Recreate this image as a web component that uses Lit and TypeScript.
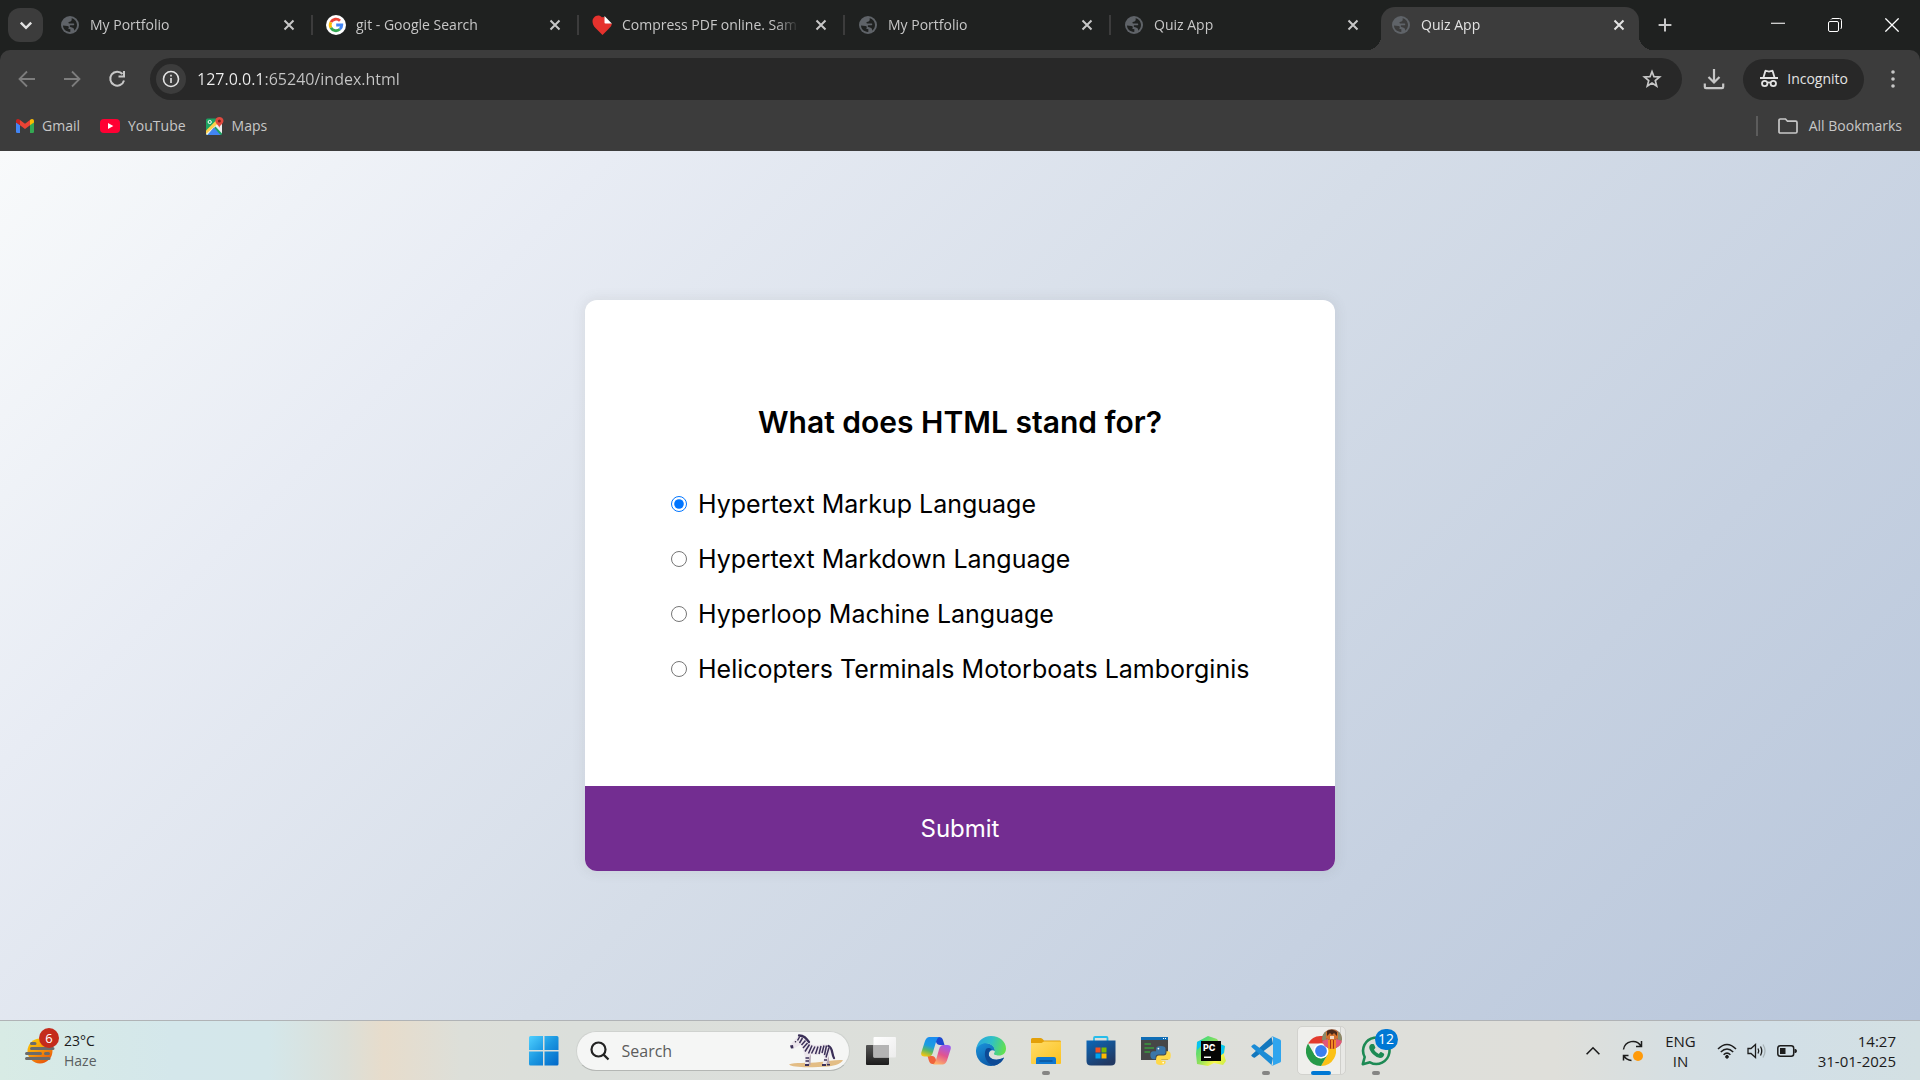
import { LitElement, html, css, svg, nothing, type TemplateResult } from "lit";
import { customElement, property, state } from "lit/decorators.js";
import { classMap } from "lit/directives/class-map.js";

/* ---------- icons ---------- */

const globe = (hole: string) => svg`<svg class="ico18" viewBox="0 0 18 18" aria-hidden="true">
  <circle cx="9" cy="9" r="9" fill="#5f6368"/>
  <path fill=${hole} d="M2 9.6 6.4 9.9C7.6 10 8 10.8 7.7 11.8L7.2 12.8 9.4 13.3 9.3 15.9C5 16 2 13 2 9.6ZM10.6 2.2C13.6 2.8 16 5.600 16 9 16 11.400 14.900 13.400 13.200 14.700 13.300 12.900 12.700 11.800 11 11.400L9.300 10.900C8.500 10.500 8.600 9.600 9.300 9.300L12.700 9.200C13.500 8.900 13.500 7.800 12.700 7.500L8.200 7.400C7.300 7.200 7.200 6.300 7.900 5.900L9.500 5.500C10.500 5.100 10.900 4 10.600 2.200Z"/>
</svg>`;

const googleIcon = svg`<svg class="ico20" viewBox="0 0 20 20" aria-hidden="true">
  <circle cx="10" cy="10" r="10" fill="#fff"/>
  <g fill="none" stroke-width="2.800">
    <path stroke="#ea4335" d="M4.900 7.200A5.800 5.800 0 0 1 14 5.800"/>
    <path stroke="#fbbc05" d="M4.900 12.800A5.800 5.800 0 0 1 4.900 7.200"/>
    <path stroke="#34a853" d="M13.800 14.300A5.800 5.800 0 0 1 4.900 12.800"/>
    <path stroke="#4285f4" d="M10.200 10H15.800A5.800 5.800 0 0 1 13.800 14.300"/>
  </g>
</svg>`;

const lovePdfIcon = svg`<svg class="ico20" viewBox="0 0 20 20" aria-hidden="true">
  <path fill="#e5322d" d="M10.500 20 3.500 13C0 9.500-.2 5 1.800 2.800 4-.2 7.800-.2 9.800 2.200L12.500 2 13.500 7.500 20 8.500C19.500 11 18 12.500 16.500 14Z"/>
  <path fill="#fff" d="M12.500 1 19.800 8.500H13.300Q12.500 8.500 12.500 7.700Z"/>
</svg>`;

const closeIcon = svg`<svg class="ico12" viewBox="0 0 12 12" aria-hidden="true"><path d="M1.500 1.500 10.500 10.500M10.500 1.500 1.500 10.500" stroke="currentColor" stroke-width="2" fill="none"/></svg>`;

const line = (size: number, d: string, width = 2) => svg`<svg width=${size} height=${size} viewBox="0 0 20 20" fill="none" stroke="currentColor" stroke-width=${width} aria-hidden="true"><path d=${d}/></svg>`;

const restoreIcon = svg`<svg width="14" height="14" viewBox="0 0 14 14" fill="none" stroke="#fff" aria-hidden="true"><rect x=".5" y="3.500" width="10" height="10" rx="1.500"/><path d="M3 1.500Q3.500.5 5 .5H11.500Q13.500.5 13.500 2.500V9Q13.500 10.500 12.500 11"/></svg>`;

const infoIcon = svg`<svg width="18" height="18" viewBox="0 0 18 18" aria-hidden="true"><circle cx="9" cy="9" r="7.500" fill="none" stroke="#e3e3e3" stroke-width="1.600"/><path d="M8.200 8H9.800V13H8.200ZM8.200 4.800H9.800V6.500H8.200Z" fill="#e3e3e3"/></svg>`;

const starIcon = svg`<svg width="20" height="20" viewBox="0 0 20 20" fill="none" stroke="#c7c7c7" stroke-width="1.700" aria-hidden="true"><path d="M10 2.600 12 7.700 17.600 8 13.300 11.600 14.700 17 10 14 5.300 17 6.700 11.600 2.400 8 8 7.700Z"/></svg>`;

const downloadIcon = svg`<svg width="22" height="22" viewBox="0 0 22 22" fill="none" stroke="#c7c7c7" stroke-width="2.200" aria-hidden="true"><path d="M11 1V14M5.500 9 11 14.500 16.500 9M1.800 15.500V19Q1.800 20.200 3 20.200H19Q20.200 20.200 20.200 19V15.500"/></svg>`;

const incognitoIcon = svg`<svg width="20" height="20" viewBox="0 0 20 20" fill="none" stroke="#e3e3e3" stroke-width="1.800" aria-hidden="true"><path d="M1 9H19M4.500 8.500 6.300 2.200Q6.600 1.600 7.300 1.800L10 2.500 12.700 1.800Q13.400 1.600 13.700 2.200L15.500 8.500M8.500 13.800Q10 12.800 11.500 13.800"/><circle cx="5.700" cy="14.500" r="2.700"/><circle cx="14.300" cy="14.500" r="2.700"/></svg>`;

const menuIcon = svg`<svg width="20" height="20" viewBox="0 0 20 20" fill="#c7c7c7" aria-hidden="true"><circle cx="10" cy="3" r="1.800"/><circle cx="10" cy="10" r="1.800"/><circle cx="10" cy="17" r="1.800"/></svg>`;

const gmailIcon = svg`<svg width="18" height="14" viewBox="0 0 18 14" aria-hidden="true"><path fill="#4285f4" d="M0 3 4 6V14H1.300Q0 14 0 12.700Z"/><path fill="#34a853" d="M18 3 14 6V14H16.700Q18 14 18 12.700Z"/><path fill="#ea4335" d="M4 1 9 4.800 14 1V6.300L9 10 4 6.300Z"/><path fill="#c5221f" d="M0 2.200C0 0 2.200-.6 4 1V6.300L0 3.400Z"/><path fill="#fbbc04" d="M18 2.200C18 0 15.800-.6 14 1V6.300L18 3.400Z"/></svg>`;

const youtubeIcon = svg`<svg width="20" height="14" viewBox="0 0 20 14" aria-hidden="true"><rect width="20" height="14" rx="4" fill="#ff0033"/><path fill="#fff" d="M8 4 13.300 7 8 10Z"/></svg>`;

const mapsIcon = svg`<svg width="18" height="18" viewBox="0 0 18 18" aria-hidden="true"><rect y="1.500" width="16" height="16.500" rx="1.500" fill="#1da462"/><path fill="#eee" d="M0 15 15 3 16 4V16.500L9.500 9.500 1.500 18Q0 18 0 16.500Z"/><path fill="#ffd04b" d="M0 13.500 10 3.500 12.500 6 0 17Z"/><path fill="#4285f4" d="M1.500 18 8 10.500 14.500 18Z"/><circle cx="3.700" cy="5" r="1.600" fill="none" stroke="#fff" stroke-width="1"/><path fill="#e04a3f" d="M13.300 11C13.100 8 9.300 7 9.300 3.800 9.300 1.500 11.200 0 13.400 0S17.500 1.500 17.500 3.800C17.500 7 13.600 8 13.300 11Z"/><circle cx="13.400" cy="3.900" r="1.500" fill="#7b231e"/></svg>`;

const folderIcon = svg`<svg width="20" height="16" viewBox="0 0 20 16" fill="none" stroke="#c7c7c7" stroke-width="1.700" aria-hidden="true"><path d="M1 2.300Q1 1 2.300 1H7.500L9.500 3.200H17.700Q19 3.200 19 4.500V13.700Q19 15 17.700 15H2.300Q1 15 1 13.700Z"/></svg>`;

const weatherIcon = svg`<svg width="30" height="30" viewBox="0 0 30 30" aria-hidden="true">
  <defs><linearGradient id="sun" x1="0" y1="0" x2=".6" y2="1"><stop offset="0" stop-color="#fbd00a"/><stop offset=".5" stop-color="#f9a00a"/><stop offset="1" stop-color="#e8590c"/></linearGradient></defs>
  <circle cx="15" cy="15" r="12.500" fill="url(#sun)"/>
  <path stroke="#6b6b6b" stroke-width="3" stroke-linecap="round" fill="none" d="M6.500 7.500H10M6.500 12.500H28M1.500 17.500H15.500M20.500 17.500H23.500M1.500 22.500H24"/>
</svg>`;

const startIcon = svg`<svg width="30" height="30" viewBox="0 0 30 30" aria-hidden="true">
  <defs><linearGradient id="win" x1="0" y1="0" x2="1" y2="1"><stop offset="0" stop-color="#4fd0ff"/><stop offset=".5" stop-color="#1a96e0"/><stop offset="1" stop-color="#0067c8"/></linearGradient></defs>
  <path fill="url(#win)" d="M1.500 0H14V14H0V1.500Q0 0 1.500 0ZM15.500 0H28Q29.500 0 29.500 1.500V14H15.500ZM0 15.500H14V29.500H1.500Q0 29.500 0 28ZM15.500 15.500H29.500V28Q29.500 29.500 28 29.500H15.500Z"/>
</svg>`;

const searchIcon = svg`<svg width="20" height="20" viewBox="0 0 20 20" fill="none" stroke="#222" stroke-width="2.200" aria-hidden="true"><circle cx="8.500" cy="8.500" r="7"/><path d="M13.600 13.600 18.500 18.500"/></svg>`;

const zebraIcon = svg`<svg width="56" height="34" viewBox="0 0 56 34" aria-hidden="true">
  <path fill="#e3bd85" d="M1 30.500C6 28 20 29.500 32 28 40 27 48 25.500 55 26 53 30 46 33 30 33 14 33.500 4 33 1 30.500Z"/>
  <path fill="#b7a8b4" d="M19 20 20.500 31H22.500L23 20ZM36 20 39 31H41.500L40.500 19Z"/>
  <path fill="#ece6ec" d="M8.500 4 11 1 14 2.500C19 3.500 20 8.500 24 10.500 30 12.500 36 9 40 11 43 13 43.500 16.500 42 20L40 24 38 31H34.500L36 24 34.500 19.500C30 21.500 27 21 23 20L21 24 20.500 31H17L17 23 15 16C14 13 13.500 11.500 12 11L6 14.500Q3 15 2 13L4 8.500Z"/>
  <path stroke="#3b3058" stroke-width="1.500" fill="none" d="M11.500 3 9.500 6.500M14.500 4 11.500 9M17.500 6.500 13.500 11M19.500 9 15 14M21.500 10.500 17 17.500M24 11.500 20.500 19.500M27 12.500 23.500 19.500M30 12.500 27.500 20M33 12 31 20M36 11.500 34 19M38.500 11.500 36.500 21M41 13.500 38 23.500M17.500 24H21M17.500 27H21M36 26H39"/>
  <path stroke="#3b3058" stroke-width="2.300" fill="none" stroke-linecap="round" d="M40.500 12C45 13.500 43.500 20 46 24M11 1.500C16 1.500 18 4 21 8"/>
  <path fill="#3b3058" d="M2 11.500 5 11 5.500 14.200 3 14.500ZM17 30H21V32H17ZM34 30H38V32H34ZM39 30H42V31.500H39Z"/>
  <circle cx="7.500" cy="7.800" r=".8" fill="#2a2240"/>
</svg>`;

const taskViewIcon = svg`<svg width="30" height="28" viewBox="0 0 30 28" aria-hidden="true"><defs><linearGradient id="tvd" x1="0" y1="0" x2="0" y2="1"><stop offset="0" stop-color="#555"/><stop offset="1" stop-color="#1c1c1c"/></linearGradient><linearGradient id="tvl" x1="0" y1="0" x2="1" y2="1"><stop offset="0" stop-color="#fff"/><stop offset="1" stop-color="#ececec"/></linearGradient></defs><rect y="8" width="23" height="20" rx="1" fill="url(#tvd)"/><rect x="7.500" width="22.500" height="20.500" rx="1" fill="url(#tvl)"/><path fill="#b4b4b4" d="M7.500 8H23V20.500H7.500Z"/></svg>`;

const copilotIcon = svg`<svg width="30" height="28" viewBox="0 0 30 28" aria-hidden="true">
  <defs>
    <linearGradient id="cpA" x1=".6" y1="0" x2=".3" y2="1"><stop offset="0" stop-color="#1a8cf0"/><stop offset=".45" stop-color="#1a9de0"/><stop offset=".7" stop-color="#58b768"/><stop offset="1" stop-color="#f2c511"/></linearGradient>
    <linearGradient id="cpB" x1=".7" y1="0" x2=".3" y2="1"><stop offset="0" stop-color="#9b5cf0"/><stop offset=".5" stop-color="#e2558f"/><stop offset="1" stop-color="#ffb066"/></linearGradient>
  </defs>
  <path fill="#1c48cf" d="M13 0H18Q21 0 22 3L23.500 8H19Q16 8 15 5Z"/>
  <path fill="#f0643c" d="M6.500 19H11Q14 19 15 23L17 27H11.500Q9 27 8 24Z"/>
  <path fill="url(#cpA)" d="M8.500 0H18Q16 1 15 5L12 15Q11 19.500 7.500 19.500H3.500Q-.5 19.500 .3 15.500L4 4Q5.500 0 8.500 0Z"/>
  <path fill="url(#cpB)" d="M21.500 27.500H12Q14 26 15 23L18 12.500Q19 8 22.500 8H26.500Q30.500 8 29.700 12L26 23.500Q24.500 27.500 21.500 27.500Z"/>
</svg>`;

const edgeIcon = svg`<svg width="30" height="30" viewBox="0 0 30 30" aria-hidden="true">
  <defs>
    <linearGradient id="edA" x1="0" y1=".3" x2="1" y2=".5"><stop offset="0" stop-color="#2aa5e0"/><stop offset=".5" stop-color="#2fc0c6"/><stop offset="1" stop-color="#62e04e"/></linearGradient>
    <linearGradient id="edB" x1="0" y1="0" x2=".7" y2="1"><stop offset="0" stop-color="#1a94dc"/><stop offset="1" stop-color="#0b52a0"/></linearGradient>
  </defs>
  <path fill="url(#edB)" d="M0 14C1 8 6 6.500 10 7 16 7.500 19 11 19 15 15 13 12 16 13 20 15 24 22 25 28 21.500 25.500 27 20.500 30 15 30 6.500 30-.5 23 0 14Z"/>
  <path fill="#0d4a96" d="M10 13C7 19 10 28 18 29.500 23 28.500 26.500 25.500 28 21.500 22 25 15 24 13 20 12 16.500 13.500 14 16 13.500 14 11.500 11.500 11.500 10 13Z"/>
  <path fill="url(#edA)" d="M0 14C1 5.500 7 0 15 0 24 0 30 6 30 12.500 30 17 27 19.500 23 19.500 19.500 19.500 17.500 18.500 18 17.500 19.500 16 19 12 16 9.500 11 5.500 3 7 0 14Z"/>
</svg>`;

const explorerIcon = svg`<svg width="30" height="26" viewBox="0 0 30 26" aria-hidden="true"><defs><linearGradient id="fe" x1="0" y1="0" x2="1" y2="1"><stop offset="0" stop-color="#ffdc69"/><stop offset="1" stop-color="#fcc21f"/></linearGradient></defs><path fill="#e3a008" d="M0 1.500Q0 0 1.500 0H9.500Q10.500 0 11.300.8L13 2.500H29Q30 2.500 30 4V8H0Z"/><path fill="url(#fe)" d="M0 5H10.500L13 3.500H30V25Q30 26 29 26H1Q0 26 0 25Z"/><path fill="#0f78d0" d="M5 26V21Q5 19 7 19H23Q25 19 25 21V26Z"/><path stroke="#0a4f95" stroke-width="1.300" d="M8.500 23H21.500"/></svg>`;

const storeIcon = svg`<svg width="30" height="30" viewBox="0 0 30 30" aria-hidden="true"><defs><linearGradient id="ms" x1="0" y1="0" x2=".6" y2="1"><stop offset="0" stop-color="#0c67b8"/><stop offset="1" stop-color="#213963"/></linearGradient></defs><path fill="none" stroke="#27bdea" stroke-width="1.800" d="M8 5.500V2Q8 1 9 1H20.500Q21.500 1 21.500 2V5.500"/><path fill="url(#ms)" d="M.5 4.500H29.500V25Q29.500 29.500 25 29.500H5Q.5 29.500 .5 25Z"/><path fill="#f25022" d="M9.500 11.500H14.500V16.500H9.500Z"/><path fill="#7fba00" d="M15.500 11.500H20.500V16.500H15.500Z"/><path fill="#00a4ef" d="M9.500 17.500H14.500V22.500H9.500Z"/><path fill="#ffb900" d="M15.500 17.500H20.500V22.500H15.500Z"/></svg>`;

const snakes = svg`<path fill="#3b76a8" d="M18.500 9.500H9.500V8.500H14V7H9Q9 5 9 4 9 1 14 1T19 4V8Q19 10 17 10H11.500Q8.500 10 8.500 13V15H7Q3 15 3 10.500T7 6.500H14"/><path fill="#ffd94a" d="M9 15.500Q9 11 12 11H17Q20 11 20 8V6.500H21.500Q24.500 6.500 24.500 11T21.500 15.500H14.500V16.500H19V18.500Q19 21 14 21T9 18.500Z"/><circle cx="11.500" cy="3.800" r=".9" fill="#fff"/><circle cx="16.500" cy="18.500" r=".9" fill="#fff"/>`;

const pythonIcon = svg`<svg width="30" height="30" viewBox="0 0 30 30" aria-hidden="true"><path fill="#474747" d="M0 1H27V24H0Z"/><path fill="#0f6db5" d="M0 1H27V4H0Z"/><path fill="#fff" d="M22 2H23V3H22ZM24 2H25V3H24Z"/><path stroke="#3c9a3f" stroke-width="1.300" d="M3.500 8H10M3.500 12H13M3.500 16H9"/><g transform="translate(6.500 9) scale(.95)">${snakes}</g></svg>`;

const pycharmIcon = svg`<svg width="30" height="30" viewBox="0 0 30 30" aria-hidden="true"><defs><linearGradient id="pc" x1="0" y1="0" x2="1" y2=".8"><stop offset="0" stop-color="#21d789"/><stop offset=".5" stop-color="#8fe05a"/><stop offset=".8" stop-color="#fcf84a"/><stop offset="1" stop-color="#d5ef4b"/></linearGradient></defs><path fill="url(#pc)" d="M1 6 12 0 21 3 24 8 29 10 28 19 30 25 27 29 18 27 12 30 1 28 0 18Z"/><path fill="#07c3f2" d="M24 8 29 10 28 17 24 20ZM1 6 6 4V9L1 14Z"/><path fill="#050505" d="M5 5H25V25H5Z"/><path fill="#fff" d="M8 20.500H15V22H8Z"/><text x="7" y="15" font-family="Inter, sans-serif" font-weight="800" font-size="9" fill="#fff">PC</text></svg>`;

const vscodeIcon = svg`<svg width="30" height="30" viewBox="0 0 30 30" aria-hidden="true"><path fill="#1277bd" d="M1 18.500 20.500 1 22 8 4 21.500Q3 22 2 21.300L.5 20Q0 19.300 1 18.500Z"/><path fill="#1b8cd6" d="M1 11.500 20.500 29 22 22 4 8.500Q3 8 2 8.700L.5 10Q0 10.700 1 11.500Z"/><path fill="#2fa5ee" d="M20 .5Q21 0 22 .4L29 3.500Q30 4 30 5V25Q30 26 29 26.500L22 29.600Q21 30 20 29.500 22 30 22 28V2Q22 0 20 .5Z"/></svg>`;

const chromeIcon = svg`<svg width="30" height="30" viewBox="0 0 30 30" aria-hidden="true"><path fill="#e33b2e" d="M2 7.500A15 15 0 0 1 28 7.500H15Z"/><path fill="#fbc116" d="M28 7.500A15 15 0 0 1 15 30L21.500 18.700 15 7.500Z"/><path fill="#269a48" d="M2 7.500A15 15 0 0 0 15 30L21.500 18.700 15 22.500 8.500 18.700Z"/><circle cx="15" cy="15" r="7.500" fill="#fff"/><circle cx="15" cy="15" r="5.900" fill="#3b7ff0"/></svg>`;

const avatarIcon = svg`<svg width="20" height="20" viewBox="0 0 20 20" aria-hidden="true"><defs><clipPath id="av"><circle cx="10" cy="10" r="10"/></clipPath></defs><g clip-path="url(#av)"><path fill="#a0694a" d="M0 0H20V20H0Z"/><path fill="#8a8a6a" d="M0 3H4V11H0ZM16 3H20V11H16Z"/><path fill="#d4722e" d="M4 3 8 1H13L16 4V9L12 11H8L4 9Z"/><path fill="#4a2a1b" d="M5 2Q10-1 15 3L15 7 12 4 10 6 8 4 5 7Z"/><path fill="#f1d9c4" d="M8 7H12V10H8Z"/><path fill="#e2577a" d="M0 12 6 10 7 20H0ZM20 12 14 10 13 20H20Z"/><path fill="#f08a24" d="M6 11H14V20H6Z"/><path stroke="#a82c16" d="M8.500 11V20M11.500 11V20"/></g></svg>`;

const whatsappIcon = svg`<svg width="30" height="30" viewBox="0 0 30 30" aria-hidden="true"><path fill="none" stroke="#1d8a54" stroke-width="2.600" stroke-linejoin="round" d="M1.800 28.200 3.700 21A13.200 13.200 0 1 1 9 26.300Z"/><path fill="#1d8a54" d="M10.500 8H12.200Q12.900 8 13.200 8.700L14.300 11.200Q14.500 11.700 14.100 12.300L13 13.700Q14.700 16.700 17.800 18L19.200 16.300Q19.600 15.800 20.200 16.100L22.800 17.400Q23.300 17.700 23.200 18.300 22.800 21.800 19 22 15.500 21.800 12 18.300 8.300 14.500 8.200 11.300 8.200 9.500 9.500 8.400 10 8 10.500 8Z"/></svg>`;

const syncIcon = svg`<svg width="22" height="22" viewBox="0 0 22 22" fill="none" stroke="#1d1d1d" stroke-width="1.500" aria-hidden="true"><path d="M1.500 9.500A9.500 9.500 0 0 1 19 6M19.500 1V6.500H14M1.500 20.500V15.500H6.500M2 16Q4.500 20 9.500 20.500"/><circle cx="16" cy="16" r="5" fill="#ff9a0a" stroke="none"/></svg>`;

const wifiIcon = svg`<svg width="20" height="16" viewBox="0 0 20 16" fill="none" stroke="#1d1d1d" stroke-width="1.500" aria-hidden="true"><path d="M1 6Q10-3 19 6M3.800 9Q10 3 16.200 9M6.600 11.800Q10 8.500 13.400 11.800"/><circle cx="10" cy="13.800" r="1.400" fill="#1d1d1d" stroke-width="1"/></svg>`;

const volumeIcon = svg`<svg width="20" height="16" viewBox="0 0 20 16" fill="none" stroke="#1d1d1d" stroke-width="1.300" aria-hidden="true"><path d="M1 5.500H4L8.500 1.500V14.500L4 10.500H1Z"/><path d="M11 5.500Q12.500 8 11 10.500M13.500 3.500Q16 8 13.500 12.500"/><path stroke="#a9b4b8" d="M16 1.500Q20 8 16 14.500"/></svg>`;

const batteryIcon = svg`<svg width="20" height="12" viewBox="0 0 20 12" aria-hidden="true"><rect x=".8" y=".8" width="15.900" height="10.400" rx="2.500" fill="none" stroke="#1d1d1d" stroke-width="1.500"/><path fill="#1d1d1d" d="M3 3H8.500V9H3ZM17.500 4H18.500Q20 4.500 20 6T18.500 8H17.500Z"/></svg>`;

/* ---------- data ---------- */

interface Tab {
  title: string;
  icon: "globe" | "google" | "pdf";
}

const TABS: Tab[] = [
  { title: "My Portfolio", icon: "globe" },
  { title: "git - Google Search", icon: "google" },
  { title: "Compress PDF online. Sam", icon: "pdf" },
  { title: "My Portfolio", icon: "globe" },
  { title: "Quiz App", icon: "globe" },
  { title: "Quiz App", icon: "globe" },
];

const ANSWERS = [
  "Hypertext Markup Language",
  "Hypertext Markdown Language",
  "Hyperloop Machine Language",
  "Helicopters Terminals Motorboats Lamborginis",
];

interface PinnedApp {
  name: string;
  icon: TemplateResult<2>;
  running?: boolean;
  active?: boolean;
  badge?: string;
}

const APPS: PinnedApp[] = [
  { name: "Task View", icon: taskViewIcon },
  { name: "Copilot", icon: copilotIcon },
  { name: "Microsoft Edge", icon: edgeIcon },
  { name: "File Explorer", icon: explorerIcon, running: true },
  { name: "Microsoft Store", icon: storeIcon },
  { name: "Python", icon: pythonIcon },
  { name: "PyCharm", icon: pycharmIcon },
  { name: "Visual Studio Code", icon: vscodeIcon, running: true },
  { name: "Google Chrome", icon: chromeIcon, active: true },
  { name: "WhatsApp", icon: whatsappIcon, running: true, badge: "12" },
];

const reset = css`
  * {
    box-sizing: border-box;
  }
  button {
    border: 0;
    padding: 0;
    background: none;
    color: inherit;
    font: inherit;
    cursor: pointer;
  }
  a {
    color: inherit;
    text-decoration: none;
  }
  svg {
    display: block;
    flex: none;
  }
`;

/* ---------- browser chrome ---------- */

@customElement("browser-bar")
class BrowserBar extends LitElement {
  @state() private selected = TABS.length - 1;

  static styles = [
    reset,
    css`
      :host {
        display: block;
        background: #1f2120;
        color: #c7c7c7;
        font: 14px/20px "Open Sans", "Noto Sans", sans-serif;
      }
      .strip {
        display: flex;
        align-items: stretch;
        height: 50px;
        padding-left: 8px;
      }
      .search-tabs {
        display: grid;
        place-items: center;
        align-self: center;
        width: 35px;
        height: 34px;
        margin-right: 4px;
        border-radius: 12px;
        background: #3c3c3c;
        color: #e3e3e3;
      }
      .tabs {
        display: flex;
        flex: 0 1 1598px;
        min-width: 0;
      }
      .tab {
        position: relative;
        display: flex;
        align-items: center;
        flex: 0 1 266px;
        min-width: 0;
        padding: 0 14px;
      }
      .tab::after {
        content: "";
        position: absolute;
        right: 0;
        top: 15px;
        width: 2px;
        height: 20px;
        background: #3c3c3c;
      }
      .tab.plain::after {
        display: none;
      }
      .pick {
        display: flex;
        align-items: center;
        gap: 11px;
        flex: 1;
        min-width: 0;
        height: 34px;
        text-align: left;
      }
      .title {
        flex: 1;
        min-width: 0;
        white-space: nowrap;
        mask-image: linear-gradient(to right, #000 calc(100% - 24px), transparent);
      }
      .close {
        display: grid;
        place-items: center;
        width: 20px;
        height: 20px;
        margin-left: 12px;
      }
      .tab.active {
        flex-basis: 258px;
        margin: 7px 6px 0 4px;
        padding: 0 10px 7px 11px;
        border-radius: 14px 14px 0 0;
        background: #3c3c3c;
        color: #e3e3e3;
      }
      .tab.active::before,
      .tab.active::after {
        content: "";
        display: block;
        position: absolute;
        top: auto;
        bottom: 0;
        width: 14px;
        height: 14px;
      }
      .tab.active::before {
        right: 100%;
        background: radial-gradient(circle at 0 0, transparent 14px, #3c3c3c 14px);
      }
      .tab.active::after {
        right: auto;
        left: 100%;
        background: radial-gradient(circle at 100% 0, transparent 14px, #3c3c3c 14px);
      }
      .ico18 {
        width: 18px;
        height: 18px;
      }
      .ico20 {
        width: 20px;
        height: 20px;
        margin: 0 -1px;
      }
      .ico12 {
        width: 12px;
        height: 12px;
      }
      .new-tab {
        display: grid;
        place-items: center;
        width: 40px;
      }
      .window {
        display: flex;
        margin-left: auto;
        color: #fff;
      }
      .window button {
        display: grid;
        place-items: center;
        width: 57px;
      }
      .toolbar {
        display: flex;
        align-items: center;
        gap: 15px;
        padding: 8px 10px 0 12px;
        border-radius: 10px 10px 0 0;
        background: #3c3c3c;
      }
      .nav {
        display: flex;
        gap: 15px;
        padding-right: 3px;
      }
      .nav button {
        display: grid;
        place-items: center;
        width: 30px;
        height: 30px;
      }
      .nav button[disabled] {
        color: #7d7d7d;
      }
      .address {
        display: flex;
        align-items: center;
        flex: 1;
        min-width: 0;
        height: 42px;
        padding: 0 20px 0 6px;
        border-radius: 21px;
        background: #282828;
      }
      .site {
        display: grid;
        place-items: center;
        width: 30px;
        height: 30px;
        border-radius: 50%;
        background: #3c3c3c;
      }
      .address input {
        flex: 1;
        min-width: 0;
        height: 30px;
        margin-left: 11px;
        padding: 0;
        border: 0;
        outline: 0;
        background: linear-gradient(to right, #f0f0f0 68px, #c7c7c7 68px);
        background-clip: text;
        -webkit-background-clip: text;
        color: transparent;
        font: 16px/30px "Open Sans", "Noto Sans", sans-serif;
      }
      .tools {
        display: flex;
        align-items: center;
        gap: 12px;
      }
      .tools .icon {
        display: grid;
        place-items: center;
        width: 34px;
        height: 34px;
      }
      .incognito {
        display: flex;
        align-items: center;
        gap: 8px;
        height: 41px;
        padding: 0 16px;
        border-radius: 21px;
        background: #282828;
        color: #e3e3e3;
      }
      .bookmarks {
        display: flex;
        align-items: center;
        gap: 20px;
        height: 51px;
        padding: 0 18px 0 16px;
        background: #3c3c3c;
      }
      .bookmarks a {
        display: flex;
        align-items: center;
        gap: 8px;
      }
      .all {
        display: flex;
        align-items: center;
        gap: 11px;
        margin-left: auto;
        padding-left: 20px;
        border-left: 2px solid #5c5c5c;
      }
    `,
  ];

  private favicon(tab: Tab, active: boolean) {
    if (tab.icon === "google") return googleIcon;
    if (tab.icon === "pdf") return lovePdfIcon;
    return globe(active ? "#3c3c3c" : "#1f2120");
  }

  render() {
    return html`
      <div class="strip">
        <button class="search-tabs" aria-label="Search tabs">${line(16, "M3.500 7 10 13.500 16.500 7", 3)}</button>
        <div class="tabs" role="tablist">
          ${TABS.map((tab, i) => {
            const active = i === this.selected;
            return html`<div class=${classMap({ tab: true, active, plain: i === this.selected - 1 })}>
              <button class="pick" role="tab" aria-selected=${active} @click=${() => (this.selected = i)}>
                ${this.favicon(tab, active)}<span class="title">${tab.title}</span>
              </button>
              <button class="close" aria-label="Close tab">${closeIcon}</button>
            </div>`;
          })}
        </div>
        <button class="new-tab" aria-label="New tab">${line(16, "M10 2V18M2 10H18", 2.5)}</button>
        <div class="window">
          <button aria-label="Minimise">${line(14, "M0 7.500H20", 1.5)}</button>
          <button aria-label="Restore">${restoreIcon}</button>
          <button aria-label="Close window">${line(14, "M.5 .5 19.500 19.500M19.500 .5 .5 19.500", 1.8)}</button>
        </div>
      </div>
      <div class="toolbar">
        <div class="nav">
          <button disabled aria-label="Back">${line(20, "M18 10H3M10 2.500 2.500 10 10 17.500", 1.8)}</button>
          <button disabled aria-label="Forward">${line(20, "M2 10H17M10 2.500 17.500 10 10 17.500", 1.8)}</button>
          <button aria-label="Reload">${line(20, "M15.500 5A7 7 0 1 0 17 11.500M17 2V7.500H11.500", 2)}</button>
        </div>
        <div class="address">
          <button class="site" aria-label="View site information">${infoIcon}</button>
          <input type="text" aria-label="Address" spellcheck="false" value="127.0.0.1:65240/index.html" />
          <button aria-label="Bookmark this tab">${starIcon}</button>
        </div>
        <div class="tools">
          <button class="icon" aria-label="Downloads">${downloadIcon}</button>
          <button class="incognito">${incognitoIcon}<span>Incognito</span></button>
          <button class="icon" aria-label="Menu">${menuIcon}</button>
        </div>
      </div>
      <nav class="bookmarks" aria-label="Bookmarks">
        <a href="#gmail">${gmailIcon}Gmail</a>
        <a href="#youtube">${youtubeIcon}YouTube</a>
        <a href="#maps">${mapsIcon}Maps</a>
        <button class="all">${folderIcon}All Bookmarks</button>
      </nav>
    `;
  }
}

/* ---------- quiz card ---------- */

@customElement("quiz-card")
class QuizCard extends LitElement {
  @property({ type: Number }) chosen = 0;

  static styles = [
    reset,
    css`
      :host {
        display: block;
        width: 100%;
        max-width: 750px;
        color: #000;
        font-family: Inter, "Open Sans", sans-serif;
      }
      .card {
        overflow: hidden;
        border-radius: 12px;
        background: #fff;
        box-shadow: 0 0 12px 2px rgba(100, 100, 100, 0.1);
      }
      .body {
        padding: 80px 80px 98px;
      }
      h2 {
        margin: 0;
        padding: 20px 0;
        font-size: 30px;
        line-height: 45px;
        font-weight: 600;
        text-align: center;
        white-space: nowrap;
      }
      ul {
        display: grid;
        gap: 17px;
        margin: 20px 0 0;
        padding: 0;
        list-style: none;
      }
      label {
        display: flex;
        align-items: center;
        gap: 11px;
        padding-left: 6px;
        font-size: 25px;
        line-height: 38px;
        white-space: nowrap;
      }
      input {
        width: 16px;
        height: 16px;
        margin: 0;
        accent-color: #0075ff;
      }
      .submit {
        width: 100%;
        height: 85px;
        background: #732d91;
        color: #fff;
        font-size: 24px;
      }
    `,
  ];

  render() {
    return html`<form class="card" @submit=${(e: Event) => e.preventDefault()}>
      <div class="body">
        <h2>What does HTML stand for?</h2>
        <ul>
          ${ANSWERS.map(
            (text, i) => html`<li>
              <label>
                <input type="radio" name="answer" .checked=${i === this.chosen} @change=${() => (this.chosen = i)} />
                <span>${text}</span>
              </label>
            </li>`
          )}
        </ul>
      </div>
      <button class="submit">Submit</button>
    </form>`;
  }
}

/* ---------- taskbar ---------- */

@customElement("task-bar")
class TaskBar extends LitElement {
  static styles = [
    reset,
    css`
      :host {
        box-sizing: border-box;
        display: grid;
        grid-template-columns: 1fr auto 1fr;
        align-items: center;
        height: 60px;
        border-top: 1px solid #b0b3b6;
        background: linear-gradient(to right, #d8ebe5 0, #d4e7eb 9%, #d4e7ea 14%, #dcdfd8 18%, #e7dccb 20%, #dddfd9 24%, #dbdfdb 30%, #dddfda 55%, #dfdfda 81%, #d6dfe2 87%, #d2dfe7 92%, #d3e0e3 100%);
        color: #1b1b1b;
        font: 15px/20px "Open Sans", "Noto Sans", sans-serif;
      }
      .weather {
        display: flex;
        align-items: center;
        gap: 9px;
        justify-self: start;
        padding-left: 25px;
        font-size: 14px;
        text-align: left;
      }
      .sun {
        position: relative;
      }
      .count {
        position: absolute;
        left: 14px;
        top: -8px;
        width: 20px;
        height: 20px;
        border-radius: 50%;
        background: #c42b1c;
        color: #fff;
        font-size: 13px;
        text-align: center;
      }
      .haze {
        color: #5a5f61;
      }
      .weather span {
        display: block;
      }
      .centre {
        display: flex;
        align-items: center;
        padding-top: 1px;
      }
      .app {
        position: relative;
        display: grid;
        place-items: center;
        width: 55px;
        height: 58px;
      }
      .app > svg {
        z-index: 1;
      }
      .app::after {
        position: absolute;
        bottom: 5px;
        height: 4px;
        border-radius: 2px;
        background: #858583;
      }
      .running::after {
        content: "";
        width: 8px;
      }
      .active::after {
        content: "";
        width: 20px;
        background: #0078d4;
        z-index: 2;
      }
      .active::before {
        content: "";
        position: absolute;
        inset: 4px 3px 5px;
        border: 1px solid #d2d2ce;
        border-radius: 5px;
        background: linear-gradient(to right, #efefec 42px, #cfcfcb 42px, #cfcfcb 43px, #e8e8e5 43px);
      }
      .avatar {
        position: absolute;
        z-index: 2;
        top: 7px;
        right: 7px;
      }
      .badge {
        position: absolute;
        z-index: 2;
        top: 7px;
        left: 26px;
        width: 23px;
        height: 21px;
        border-radius: 11px;
        background: #0078d4;
        color: #fff;
        font-size: 14px;
        line-height: 20px;
      }
      .search {
        display: flex;
        align-items: center;
        width: 274px;
        height: 40px;
        margin: 0 4px;
        padding: 0 5px 0 13px;
        border: 1px solid #cfd2cf;
        border-bottom-color: #b4b7b4;
        border-radius: 20px;
        background: #f5f6f5;
      }
      .search input {
        flex: 1;
        min-width: 0;
        margin-left: 12px;
        padding: 0;
        border: 0;
        outline: 0;
        background: none;
        font: 16px/24px "Open Sans", "Noto Sans", sans-serif;
      }
      .search input::placeholder {
        color: #5c5c5c;
        opacity: 1;
      }
      .tray {
        display: flex;
        align-items: center;
        justify-self: end;
        gap: 21px;
        padding-right: 24px;
      }
      .lang {
        text-align: center;
      }
      .status {
        display: flex;
        align-items: center;
        gap: 10px;
      }
      .clock {
        text-align: right;
      }
      .tray span {
        display: block;
      }
    `,
  ];

  render() {
    return html`
      <button class="weather">
        <span class="sun">${weatherIcon}<span class="count">6</span></span>
        <span><span>23°C</span><span class="haze">Haze</span></span>
      </button>
      <div class="centre">
        <button class="app" aria-label="Start">${startIcon}</button>
        <label class="search">${searchIcon}<input type="text" placeholder="Search" aria-label="Search" />${zebraIcon}</label>
        ${APPS.map(
          (app) => html`<button
            class=${classMap({ app: true, running: !!app.running, active: !!app.active })}
            aria-label=${app.name}
          >
            ${app.icon}${app.active ? html`<span class="avatar">${avatarIcon}</span>` : nothing}
            ${app.badge ? html`<span class="badge">${app.badge}</span>` : nothing}
          </button>`
        )}
      </div>
      <div class="tray">
        <button aria-label="Hidden icons">${line(16, "M2 14 10 6 18 14", 2)}</button>
        <button aria-label="Updates">${syncIcon}</button>
        <button class="lang"><span>ENG</span><span>IN</span></button>
        <button class="status" aria-label="Network, volume, battery">${wifiIcon}${volumeIcon}${batteryIcon}</button>
        <button class="clock"><span>14:27</span><span>31-01-2025</span></button>
      </div>
    `;
  }
}

@customElement("app-root")
class AppRoot extends LitElement {
  static styles = css`
    :host {
      display: flex;
      flex-direction: column;
      min-height: 100vh;
    }
    main {
      display: flex;
      flex: 1;
      align-items: center;
      justify-content: center;
      background: linear-gradient(135deg, #f8fafb 0, #e8ecf4 22%, #d5dde8 50%, #c6d1e1 75%, #b8c6db 100%);
    }
  `;

  render() {
    return html`
      <browser-bar></browser-bar>
      <main><quiz-card></quiz-card></main>
      <task-bar></task-bar>
    `;
  }
}
